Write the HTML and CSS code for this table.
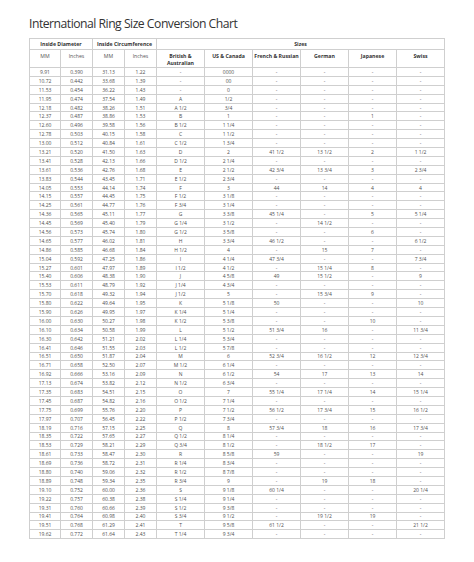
FILE: index.html
```html
<!DOCTYPE html>
<html>
<head>
<meta charset="utf-8">
<link rel="stylesheet" href="styles.css">
</head>
<body>
<div class="page">
<h1 class="title">International Ring Size Conversion Chart</h1>
<table class="chart">
<colgroup><col class="c-s"><col class="c-m"><col class="c-m"><col class="c-m"><col class="c-l"><col class="c-l"><col class="c-l"><col class="c-l"><col class="c-l"><col class="c-l"></colgroup>
<thead>
<tr class="hrow1"><th colspan="2">Inside Diameter</th><th colspan="2">Inside Circumference</th><th colspan="6">Sizes</th></tr>
<tr class="hrow2"><th class="unit">MM</th><th class="unit">Inches</th><th class="unit">MM</th><th class="unit">Inches</th><th>British &amp;<br>Australian</th><th>US &amp; Canada</th><th>French &amp; Russian</th><th>German</th><th>Japanese</th><th>Swiss</th></tr>
</thead>
<tbody>
<tr><td>9.91</td><td>0.390</td><td>31.13</td><td>1.22</td><td>-</td><td>0000</td><td>-</td><td>-</td><td>-</td><td>-</td></tr>
<tr><td>10.72</td><td>0.442</td><td>33.68</td><td>1.39</td><td>-</td><td>00</td><td>-</td><td>-</td><td>-</td><td>-</td></tr>
<tr><td>11.53</td><td>0.454</td><td>36.22</td><td>1.43</td><td>-</td><td>0</td><td>-</td><td>-</td><td>-</td><td>-</td></tr>
<tr><td>11.95</td><td>0.474</td><td>37.54</td><td>1.49</td><td>A</td><td>1/2</td><td>-</td><td>-</td><td>-</td><td>-</td></tr>
<tr><td>12.18</td><td>0.482</td><td>38.26</td><td>1.51</td><td>A 1/2</td><td>3/4</td><td>-</td><td>-</td><td>-</td><td>-</td></tr>
<tr><td>12.37</td><td>0.487</td><td>38.86</td><td>1.53</td><td>B</td><td>1</td><td>-</td><td>-</td><td>1</td><td>-</td></tr>
<tr><td>12.60</td><td>0.496</td><td>39.58</td><td>1.56</td><td>B 1/2</td><td>1 1/4</td><td>-</td><td>-</td><td>-</td><td>-</td></tr>
<tr><td>12.78</td><td>0.503</td><td>40.15</td><td>1.58</td><td>C</td><td>1 1/2</td><td>-</td><td>-</td><td>-</td><td>-</td></tr>
<tr><td>13.00</td><td>0.512</td><td>40.84</td><td>1.61</td><td>C 1/2</td><td>1 3/4</td><td>-</td><td>-</td><td>-</td><td>-</td></tr>
<tr><td>13.21</td><td>0.520</td><td>41.50</td><td>1.63</td><td>D</td><td>2</td><td>41 1/2</td><td>13 1/2</td><td>2</td><td>1 1/2</td></tr>
<tr><td>13.41</td><td>0.528</td><td>42.13</td><td>1.66</td><td>D 1/2</td><td>2 1/4</td><td>-</td><td>-</td><td>-</td><td>-</td></tr>
<tr><td>13.61</td><td>0.536</td><td>42.76</td><td>1.68</td><td>E</td><td>2 1/2</td><td>42 3/4</td><td>13 3/4</td><td>3</td><td>2 3/4</td></tr>
<tr><td>13.83</td><td>0.544</td><td>43.45</td><td>1.71</td><td>E 1/2</td><td>2 3/4</td><td>-</td><td>-</td><td>-</td><td>-</td></tr>
<tr><td>14.05</td><td>0.553</td><td>44.14</td><td>1.74</td><td>F</td><td>3</td><td>44</td><td>14</td><td>4</td><td>4</td></tr>
<tr><td>14.15</td><td>0.557</td><td>44.45</td><td>1.75</td><td>F 1/2</td><td>3 1/8</td><td>-</td><td>-</td><td>-</td><td>-</td></tr>
<tr><td>14.25</td><td>0.561</td><td>44.77</td><td>1.76</td><td>F 3/4</td><td>3 1/4</td><td>-</td><td>-</td><td>-</td><td>-</td></tr>
<tr><td>14.36</td><td>0.565</td><td>45.11</td><td>1.77</td><td>G</td><td>3 3/8</td><td>45 1/4</td><td>-</td><td>5</td><td>5 1/4</td></tr>
<tr><td>14.45</td><td>0.569</td><td>45.40</td><td>1.79</td><td>G 1/4</td><td>3 1/2</td><td>-</td><td>14 1/2</td><td>-</td><td>-</td></tr>
<tr><td>14.56</td><td>0.573</td><td>45.74</td><td>1.80</td><td>G 1/2</td><td>3 5/8</td><td>-</td><td>-</td><td>6</td><td>-</td></tr>
<tr><td>14.65</td><td>0.577</td><td>46.02</td><td>1.81</td><td>H</td><td>3 3/4</td><td>46 1/2</td><td>-</td><td>-</td><td>6 1/2</td></tr>
<tr><td>14.86</td><td>0.585</td><td>46.68</td><td>1.84</td><td>H 1/2</td><td>4</td><td>-</td><td>15</td><td>7</td><td>-</td></tr>
<tr><td>15.04</td><td>0.592</td><td>47.25</td><td>1.86</td><td>I</td><td>4 1/4</td><td>47 3/4</td><td>-</td><td>-</td><td>7 3/4</td></tr>
<tr><td>15.27</td><td>0.601</td><td>47.97</td><td>1.89</td><td>I 1/2</td><td>4 1/2</td><td>-</td><td>15 1/4</td><td>8</td><td>-</td></tr>
<tr><td>15.40</td><td>0.606</td><td>48.38</td><td>1.90</td><td>J</td><td>4 5/8</td><td>49</td><td>15 1/2</td><td>-</td><td>9</td></tr>
<tr><td>15.53</td><td>0.611</td><td>48.79</td><td>1.92</td><td>J 1/4</td><td>4 3/4</td><td>-</td><td>-</td><td>-</td><td>-</td></tr>
<tr><td>15.70</td><td>0.618</td><td>49.32</td><td>1.94</td><td>J 1/2</td><td>5</td><td>-</td><td>15 3/4</td><td>9</td><td>-</td></tr>
<tr><td>15.80</td><td>0.622</td><td>49.64</td><td>1.95</td><td>K</td><td>5 1/8</td><td>50</td><td>-</td><td>-</td><td>10</td></tr>
<tr><td>15.90</td><td>0.626</td><td>49.95</td><td>1.97</td><td>K 1/4</td><td>5 1/4</td><td>-</td><td>-</td><td>-</td><td>-</td></tr>
<tr><td>16.00</td><td>0.630</td><td>50.27</td><td>1.98</td><td>K 1/2</td><td>5 3/8</td><td>-</td><td>-</td><td>10</td><td>-</td></tr>
<tr><td>16.10</td><td>0.634</td><td>50.58</td><td>1.99</td><td>L</td><td>5 1/2</td><td>51 3/4</td><td>16</td><td>-</td><td>11 3/4</td></tr>
<tr><td>16.30</td><td>0.642</td><td>51.21</td><td>2.02</td><td>L 1/4</td><td>5 3/4</td><td>-</td><td>-</td><td>-</td><td>-</td></tr>
<tr><td>16.41</td><td>0.646</td><td>51.55</td><td>2.03</td><td>L 1/2</td><td>5 7/8</td><td>-</td><td>-</td><td>-</td><td>-</td></tr>
<tr><td>16.51</td><td>0.650</td><td>51.87</td><td>2.04</td><td>M</td><td>6</td><td>52 3/4</td><td>16 1/2</td><td>12</td><td>12 3/4</td></tr>
<tr><td>16.71</td><td>0.658</td><td>52.50</td><td>2.07</td><td>M 1/2</td><td>6 1/4</td><td>-</td><td>-</td><td>-</td><td>-</td></tr>
<tr><td>16.92</td><td>0.666</td><td>53.16</td><td>2.09</td><td>N</td><td>6 1/2</td><td>54</td><td>17</td><td>13</td><td>14</td></tr>
<tr><td>17.13</td><td>0.674</td><td>53.82</td><td>2.12</td><td>N 1/2</td><td>6 3/4</td><td>-</td><td>-</td><td>-</td><td>-</td></tr>
<tr><td>17.35</td><td>0.683</td><td>54.51</td><td>2.15</td><td>O</td><td>7</td><td>55 1/4</td><td>17 1/4</td><td>14</td><td>15 1/4</td></tr>
<tr><td>17.45</td><td>0.687</td><td>54.82</td><td>2.16</td><td>O 1/2</td><td>7 1/4</td><td>-</td><td>-</td><td>-</td><td>-</td></tr>
<tr><td>17.75</td><td>0.699</td><td>55.76</td><td>2.20</td><td>P</td><td>7 1/2</td><td>56 1/2</td><td>17 3/4</td><td>15</td><td>16 1/2</td></tr>
<tr><td>17.97</td><td>0.707</td><td>56.45</td><td>2.22</td><td>P 1/2</td><td>7 3/4</td><td>-</td><td>-</td><td>-</td><td>-</td></tr>
<tr><td>18.19</td><td>0.716</td><td>57.15</td><td>2.25</td><td>Q</td><td>8</td><td>57 3/4</td><td>18</td><td>16</td><td>17 3/4</td></tr>
<tr><td>18.35</td><td>0.722</td><td>57.65</td><td>2.27</td><td>Q 1/2</td><td>8 1/4</td><td>-</td><td>-</td><td>-</td><td>-</td></tr>
<tr><td>18.53</td><td>0.729</td><td>58.21</td><td>2.29</td><td>Q 3/4</td><td>8 1/2</td><td>-</td><td>18 1/2</td><td>17</td><td>-</td></tr>
<tr><td>18.61</td><td>0.733</td><td>58.47</td><td>2.30</td><td>R</td><td>8 5/8</td><td>59</td><td>-</td><td>-</td><td>19</td></tr>
<tr><td>18.69</td><td>0.736</td><td>58.72</td><td>2.31</td><td>R 1/4</td><td>8 3/4</td><td>-</td><td>-</td><td>-</td><td>-</td></tr>
<tr><td>18.80</td><td>0.740</td><td>59.06</td><td>2.32</td><td>R 1/2</td><td>8 7/8</td><td>-</td><td>-</td><td>-</td><td>-</td></tr>
<tr><td>18.89</td><td>0.748</td><td>59.34</td><td>2.35</td><td>R 3/4</td><td>9</td><td>-</td><td>19</td><td>18</td><td>-</td></tr>
<tr><td>19.10</td><td>0.752</td><td>60.00</td><td>2.36</td><td>S</td><td>9 1/8</td><td>60 1/4</td><td>-</td><td>-</td><td>20 1/4</td></tr>
<tr><td>19.22</td><td>0.757</td><td>60.38</td><td>2.38</td><td>S 1/4</td><td>9 1/4</td><td>-</td><td>-</td><td>-</td><td>-</td></tr>
<tr><td>19.31</td><td>0.760</td><td>60.66</td><td>2.39</td><td>S 1/2</td><td>9 3/8</td><td>-</td><td>-</td><td>-</td><td>-</td></tr>
<tr><td>19.41</td><td>0.764</td><td>60.98</td><td>2.40</td><td>S 3/4</td><td>9 1/2</td><td>-</td><td>19 1/2</td><td>19</td><td>-</td></tr>
<tr><td>19.51</td><td>0.768</td><td>61.29</td><td>2.41</td><td>T</td><td>9 5/8</td><td>61 1/2</td><td>-</td><td>-</td><td>21 1/2</td></tr>
<tr><td>19.62</td><td>0.772</td><td>61.64</td><td>2.43</td><td>T 1/4</td><td>9 3/4</td><td>-</td><td>-</td><td>-</td><td>-</td></tr>
</tbody>
</table>
</div>
</body>
</html>
```
FILE: styles.css
```css
html, body {
  margin: 0;
  padding: 0;
  background: #ffffff;
}

body {
  font-family: "Open Sans", "Liberation Sans", sans-serif;
}

.page {
  padding: 16px 0 0 29px;
}

.title {
  margin: 0 0 6px 0;
  font-size: 12.2px;
  line-height: 16px;
  font-weight: 400;
  color: #333333;
  letter-spacing: -0.5px;
}

.chart {
  border-collapse: collapse;
  table-layout: fixed;
  width: 415px;
}

.c-s { width: 31px; }
.c-m { width: 32px; }
.c-l { width: 48px; }

.chart th,
.chart td {
  border: 1px solid #cfcfcf;
  padding: 0;
  text-align: center;
}

.chart th {
  font-size: 5.2px;
  font-weight: 700;
  color: #333333;
  line-height: 7px;
}

.hrow1 th {
  height: 10px;
  vertical-align: middle;
}

.hrow2 th {
  height: 17px;
  vertical-align: top;
  padding-top: 3px;
  box-sizing: border-box;
}

.hrow2 th.unit {
  font-weight: 400;
  color: #555555;
}

.chart td {
  height: 7.9px;
  font-size: 5px;
  line-height: 6px;
  color: #4f4f4f;
}
```
